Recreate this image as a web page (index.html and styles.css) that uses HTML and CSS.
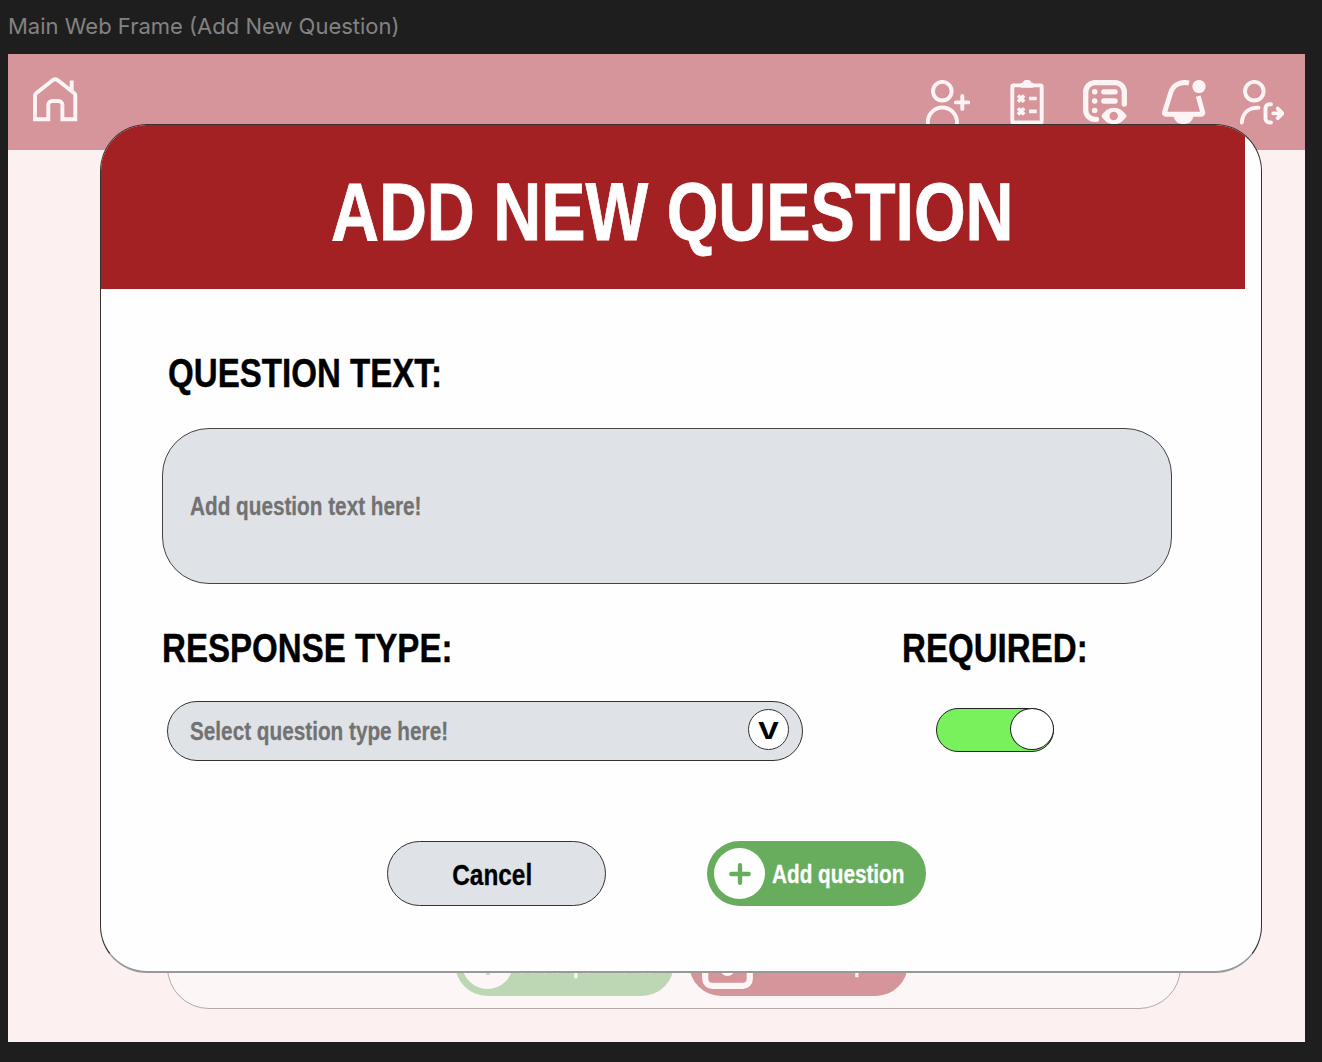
FILE: index.html
```html
<!DOCTYPE html>
<html lang="en">
<head>
<meta charset="utf-8">
<title>Add New Question</title>
<link rel="stylesheet" href="styles.css">
</head>
<body>
<div class="frame-name">Main Web Frame (Add New Question)</div>
<div class="frame">
  <nav class="navbar">
    <svg class="icon icon-home" viewBox="0 0 45 45" width="45" height="45"><path d="M2 42.3V18.6a3 3 0 0 1 1.2-2.3L19.9 3.1a3.6 3.6 0 0 1 4.6 0L41.3 16.3a3 3 0 0 1 1 2.3v23.7H29.4V28a4 4 0 0 0-4-4h-6.1a4 4 0 0 0-4 4v14.3zM38.7 3.5V14"/></svg>
    <div class="nav-actions">
      <svg class="icon" viewBox="0 0 44 46" width="44" height="46"><circle cx="16.3" cy="11.2" r="9.3"/><path class="round" d="M1.8 45v-2.9a14.6 14.6 0 0 1 29.2 0V45M29.8 22.4h12.6M36.3 15.9v13"/></svg>
      <svg class="icon" viewBox="0.5 0 44 46" width="44" height="46"><rect x="7.8" y="5.4" width="29.4" height="37" rx="1"/><rect class="solid" x="15.8" y="2.8" width="13.5" height="5" rx="1.500"/><rect class="solid" x="18.300" y="0" width="8.600" height="7" rx="3.500"/><path class="marks" d="M13.500 15.400l6.200 6.400M19.700 15.400l-6.200 6.400M13.500 28.200l6.200 6.400M19.700 28.200l-6.200 6.400M24.600 18.500h7.600M24.600 31.400h7.600"/></svg>
      <svg class="icon" viewBox="0 0 44 46" width="44" height="46"><path class="round thick" d="M41.3 24V12A9.3 9.3 0 0 0 32 2.7H12A9.3 9.3 0 0 0 2.7 12v18a9.3 9.3 0 0 0 9.3 9.3h1.5M20.8 11.8h11.3M20.8 21h11.3"/><path class="solid" fill-rule="evenodd" d="M18.3 36C21.5 30.5 26 27.7 31 27.7S40.500 30.500 43.700 36C40.500 41.500 36 44.300 31 44.300S21.500 41.500 18.300 36zM30.700 31.800a4.200 4.200 0 1 0 0 8.400a4.200 4.200 0 0 0 0-8.400z"/><g class="solid"><circle cx="11.7" cy="11.8" r="2.8"/><circle cx="11.700" cy="21" r="2.8"/><circle cx="11.700" cy="30.500" r="2.800"/></g></svg>
      <svg class="icon" viewBox="0 0 44 46" width="44" height="46"><path class="bell" d="M27 3C18 .800 10.500 5.500 8.600 13L2.500 32.500a1.300 1.300 0 0 0 1.200 1.700H39.600a1.300 1.300 0 0 0 1.200-1.700L36.200 16.200"/><path class="solid" d="M11.500 36h20c-1 5-4.500 8.200-10 8.200s-9-3.200-10-8.200z"/><circle class="solid" cx="37" cy="6.500" r="6.600"/></svg>
      <svg class="icon" viewBox="0 0 44 46" width="44" height="46"><circle cx="14.300" cy="11.200" r="9.300"/><path class="round" d="M1.800 42.600C2.500 33 8.500 27.400 18.500 27.700M31 24.200h-1.500a4 4 0 0 0-4 4v10.300a4 4 0 0 0 4 4H31M33.300 33.400h8.500M37.800 28.600l4.600 4.800-4.600 4.800"/></svg>
    </div>
  </nav>
  <main class="page">
    <section class="card">
      <button class="pill pill-add muted"><span class="disc"><svg viewBox="0 0 22 22" width="22" height="22"><path d="M11 2.300v17.400M2.300 11h17.400"/></svg></span><span class="narrow">Add question</span></button>
      <button class="pill pill-save"><svg class="save" viewBox="0 0 51 51" width="51" height="51"><rect x="3.200" y="3.200" width="44.600" height="44.600" rx="7"/><circle cx="25.500" cy="30.500" r="7.500"/></svg><span class="narrow">Save template</span></button>
    </section>
  </main>

  <div class="dialog" role="dialog">
    <header class="dialog-head"><h1 class="narrow">ADD NEW QUESTION</h1></header>
    <form class="form">
      <label class="label label-text"><span class="narrow">QUESTION TEXT:</span></label>
      <div class="textbox"><span class="narrow">Add question text here!</span></div>
      <div class="options">
        <div class="field-type">
          <label class="label"><span class="narrow">RESPONSE TYPE:</span></label>
          <div class="select"><span class="narrow">Select question type here!</span><span class="caret"><b>V</b></span></div>
        </div>
        <div class="field-required">
          <label class="label"><span class="narrow">REQUIRED:</span></label>
          <div class="toggle"><span class="knob"></span></div>
        </div>
      </div>
      <div class="buttons">
        <button type="button" class="pill pill-cancel"><span class="narrow">Cancel</span></button>
        <button type="button" class="pill pill-add"><span class="disc"><svg viewBox="0 0 22 22" width="22" height="22"><path d="M11 2.300v17.400M2.300 11h17.400"/></svg></span><span class="narrow">Add question</span></button>
      </div>
    </form>
  </div>
</div>
</body>
</html>
```
FILE: styles.css
```css
* { box-sizing: border-box; }
body {
  margin: 0;
  height: 1062px;
  padding: 0 17px 20px 8px;
  overflow: hidden;
  background: #1e1e1e;
  font-family: "Liberation Sans", Arial, sans-serif;
  font-weight: 700;
}
.frame-name {
  height: 54px;
  font: 400 22px/53px Inter, sans-serif;
  color: #828282;
  white-space: nowrap;
}
.frame {
  position: relative;
  height: 988px;
  display: flex;
  flex-direction: column;
  background: #fdf0f0;
}
.navbar {
  height: 96px;
  flex: none;
  display: flex;
  justify-content: space-between;
  padding: 26px 21px 0 25px;
  background: #d6949b;
}
.nav-actions { display: flex; gap: 34.5px; }
.icon { display: block; fill: none; stroke: #fdf5f5; stroke-width: 3.9; }
.icon-home { margin-top: -3.5px; }
.round { stroke-linecap: round; stroke-linejoin: round; }
.thick { stroke-width: 5.3; }
.marks { stroke-width: 3.6; }
.bell { stroke-width: 4.9; }
.solid { fill: #fdf5f5; stroke: none; }

.page { flex: 1; padding: 20px 124px 33px 159px; }
.card {
  height: 100%;
  display: flex;
  align-items: flex-end;
  gap: 15px;
  padding: 0 0 12px 287px;
  border: 1px solid #b3aaab;
  border-radius: 42px;
  background: #fdf6f6;
}

.narrow {
  display: inline-block;
  transform: scaleX(.813);
  transform-origin: 0 50%;
  white-space: nowrap;
  -webkit-text-stroke: .01em currentColor;
}

.pill {
  width: 219px;
  height: 65px;
  display: flex;
  align-items: center;
  padding: 0 7px;
  border: 0;
  border-radius: 33px;
  font: inherit;
  font-size: 25.5px;
  color: #fff;
}
.pill-add { gap: 7px; background: #68ad5d; }
.pill-add .narrow { padding-top: 2px; }
.disc {
  flex: none;
  width: 51px;
  height: 51px;
  display: grid;
  place-items: center;
  border-radius: 50%;
  background: #fff;
}
.disc path { stroke: #68ad5d; stroke-width: 4.4; stroke-linecap: round; }
.muted { background: #bdd7b4; color: #fdf6f6; }
.muted .disc { background: #fdf6f6; }
.muted .disc path { stroke: #bdd7b4; }
.pill-save { gap: 10px; padding-left: 13px; background: #d6949b; color: #fdf6f6; }
.save { flex: none; fill: none; stroke: #fdf6f6; stroke-width: 6.200; }
.save circle { fill: #fdf6f6; stroke: none; }
.pill-cancel {
  justify-content: center;
  padding: 2px 15px 0 7px;
  border: 1px solid #333;
  background: #dfe2e7;
  font-size: 30px;
  color: #000;
}
.pill-cancel .narrow { transform-origin: 50% 50%; }

.dialog {
  position: absolute;
  left: 92px;
  top: 70px;
  width: 1162px;
  height: 849px;
  overflow: hidden;
  border: 1px solid #333;
  border-bottom: 2px solid #999;
  border-radius: 47px;
  background: #fefefe;
}
.dialog-head {
  width: 1144px;
  height: 164px;
  display: flex;
  align-items: center;
  justify-content: center;
  background: #a32123;
}
.dialog-head h1 {
  margin: 10px 0 0 -1px;
  font-size: 81px;
  line-height: 1;
  color: #fff;
  transform: scaleX(.82);
  transform-origin: 50% 50%;
}
.form { padding: 0 89px 0 61px; }
.label {
  display: block;
  height: 46px;
  font-size: 41px;
  line-height: 46px;
}
.label .narrow { transform: scaleX(.807); }
.label-text { margin: 61px 0 0 5.5px; }
.textbox {
  height: 156px;
  display: flex;
  align-items: center;
  margin-top: 32px;
  padding-left: 27px;
  border: 1px solid #444;
  border-radius: 47px;
  background: #dfe2e7;
  font-size: 25.5px;
  color: #727272;
}
.options { display: flex; margin-top: 41px; }
.field-type { width: 738px; }
.field-required .label { margin-left: 2px; }
.select {
  width: 636px;
  height: 60px;
  display: flex;
  align-items: center;
  justify-content: space-between;
  margin: 30px 0 0 5px;
  padding: 0 13px 3px 22px;
  border: 1px solid #333;
  border-radius: 30px;
  background: #dfe2e7;
  font-size: 25.5px;
  color: #727272;
}
.select > .narrow { padding-top: 4px; }
.caret {
  width: 41px;
  height: 41px;
  display: grid;
  place-items: center;
  padding-top: 4px;
  border: 1px solid #333;
  border-radius: 50%;
  background: #fff;
  font-family: Inter, sans-serif;
  font-size: 23px;
  color: #000;
}
.caret b { line-height: 1; font-weight: 700; transform: scaleX(1.25); }
.toggle {
  width: 118px;
  height: 44px;
  display: flex;
  justify-content: flex-end;
  margin: 37px 0 0 36px;
  border: 1px solid #222;
  border-radius: 22px;
  background: #79f15d;
}
.knob {
  width: 44px;
  height: 42px;
  margin: -1px -1px 0 0;
  border: 1px solid #222;
  border-radius: 50%;
  background: #fff;
}
.buttons { display: flex; gap: 101px; margin: 80px 0 0 225px; }
```
